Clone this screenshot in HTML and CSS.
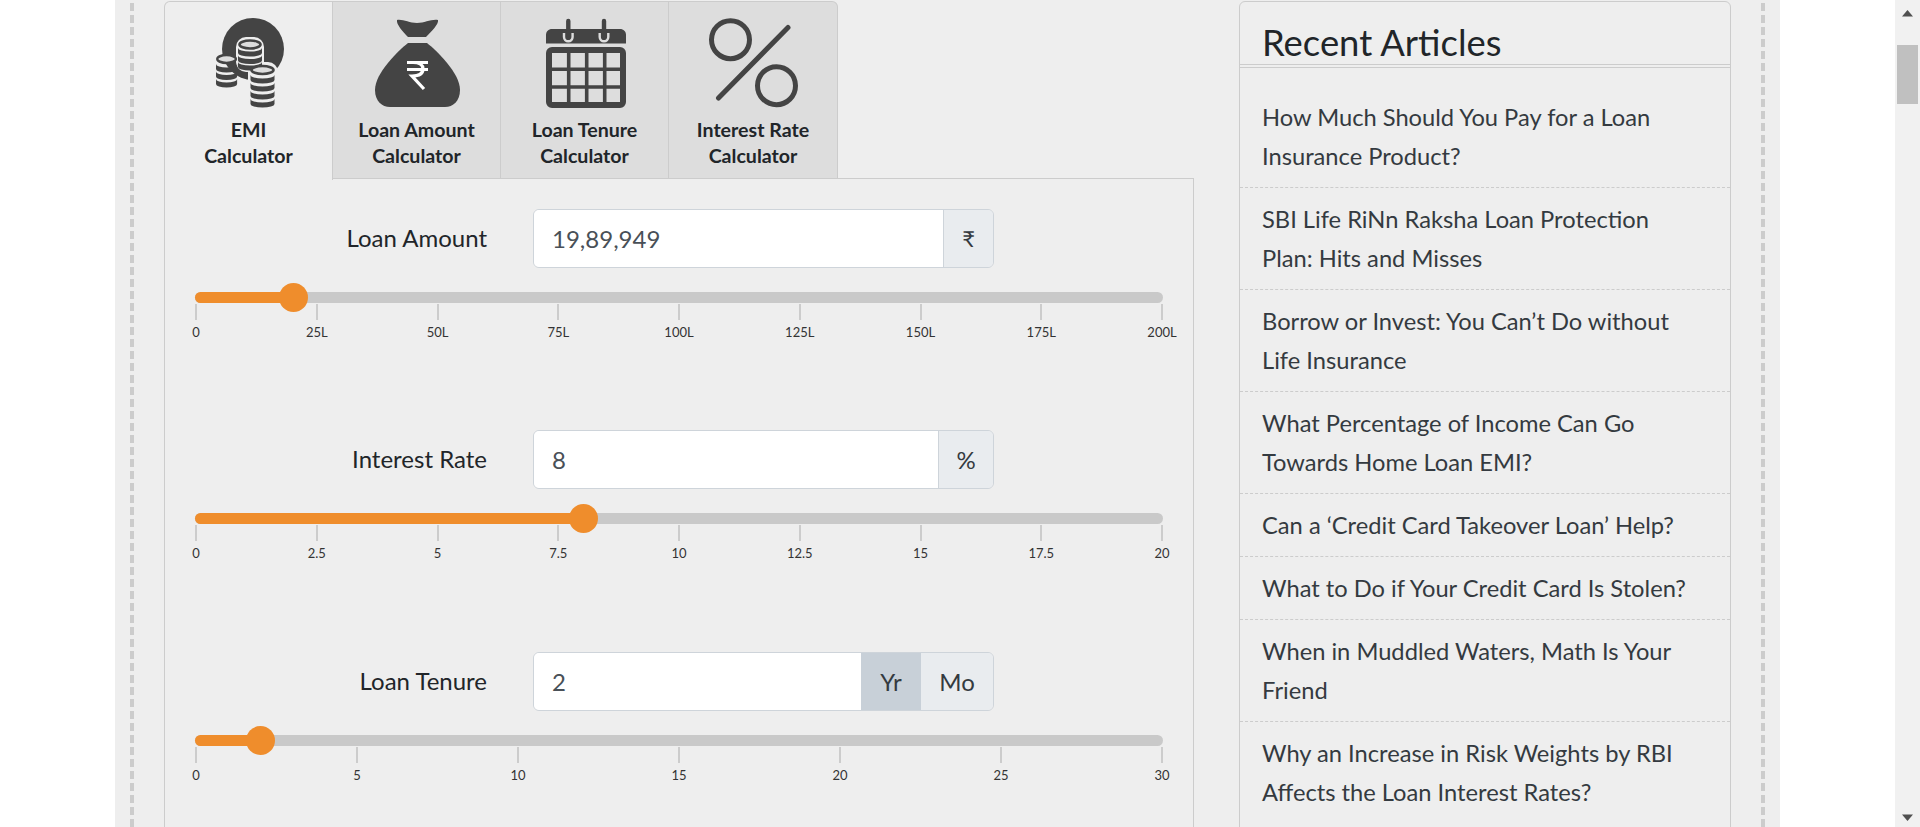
FILE: index.html
```html
<!DOCTYPE html>
<html lang="en">
<head>
    <meta charset="UTF-8">
    <meta name="viewport" content="width=device-width, initial-scale=1.0">
    <title>EMI Calculator</title>
    <link rel="stylesheet" href="styles.css">
</head>
<body>
<div class="screen">
    <div class="page">
        <div class="wrap">
            <main class="calculator">
                <nav class="tabs">
                    <a class="tab active">
                        <svg class="tab-icon" width="68" height="90" viewBox="0 0 68 90">
                            <defs>
                                <path id="band" d="M0 0a12 3.6 0 0 0 24 0v5a12 3.6 0 0 1-24 0z"/>
                            </defs>
                            <circle cx="37" cy="31" r="31" fill="#444"/>
                            <rect x="20" y="19" width="28" height="35" rx="10" fill="#eee"/>
                            <rect x="32" y="44" width="30" height="48" rx="10" fill="#eee"/>
                            <g fill="#444">
                                <ellipse cx="34" cy="26.5" rx="10.5" ry="4" fill="#ddd" stroke="#444" stroke-width="2.6"/>
                                <use href="#band" x="22" y="30"/>
                                <use href="#band" x="22" y="37.500"/>
                                <use href="#band" x="22" y="44"/>
                            </g>
                            <g fill="#444" transform="translate(0 15.5) scale(.88 1)">
                                <ellipse cx="12" cy="25.5" rx="10.6" ry="4" fill="#ddd" stroke="#444" stroke-width="2.6"/>
                                <use href="#band" y="30.500"/>
                                <use href="#band" y="38"/>
                                <use href="#band" y="45.500"/>
                            </g>
                            <g fill="#444">
                                <ellipse cx="46.5" cy="52" rx="11" ry="4" fill="#ddd" stroke="#444" stroke-width="2.6"/>
                                <use href="#band" x="34.5" y="57"/>
                                <use href="#band" x="34.5" y="65"/>
                                <use href="#band" x="34.5" y="73"/>
                                <use href="#band" x="34.5" y="81"/>
                            </g>
                        </svg>
                        <span>EMI<br>Calculator</span>
                    </a>
                    <a class="tab">
                        <svg class="tab-icon tab-icon-wide" width="85" height="90" viewBox="0 0 85 90">
                            <path fill="#444" d="M22 2C28 1 34 5 42 5S56 1 63 2C64 6 56 14 51 19H33C28 14 21 6 22 2Z"/>
                            <path fill="#444" d="M33 25H52C62 33 85 55 85 72C85 83 78 89 70 89H15C7 89 0 83 0 72C0 55 23 33 33 25Z"/>
                            <path fill="none" stroke="#fff" stroke-width="3.2" d="M32 44.5H53M32 51.5H53M38 44.5C45 44.5 48 47 48 51C48 55.5 44 58 37 58L49 71"/>
                        </svg>
                        <span>Loan Amount<br>Calculator</span>
                    </a>
                    <a class="tab">
                        <svg class="tab-icon" width="80" height="90" viewBox="0 0 80 90">
                            <path fill="#444" d="M0 25.5V17C0 13.500 2.500 11 6 11H74C77.500 11 80 13.500 80 17V25.500Z"/>
                            <path fill="none" stroke="#ddd" stroke-width="2.400" d="M18 15V19A4.300 4.300 0 0 0 26.600 19V15M53.700 15V19A4.300 4.300 0 0 0 62.300 19V15"/>
                            <path fill="none" stroke="#444" stroke-width="4.400" stroke-linecap="round" d="M22.300 3V19M58 3V19"/>
                            <rect x="3" y="32" width="74" height="55" rx="3" fill="none" stroke="#444" stroke-width="6"/>
                            <path fill="none" stroke="#444" stroke-width="3.600" d="M22.700 32V87M40.700 32V87M58.700 32V87M3 51.200H77M3 69H77"/>
                        </svg>
                        <span>Loan Tenure<br>Calculator</span>
                    </a>
                    <a class="tab last">
                        <svg class="tab-icon tab-icon-wide" width="90" height="90" viewBox="0 0 90 90">
                            <g fill="none" stroke="#444" stroke-width="5">
                                <circle cx="21.500" cy="21.700" r="19"/>
                                <circle cx="67.500" cy="67.700" r="19"/>
                                <path stroke-linecap="round" d="M79 9.500L9.500 80"/>
                            </g>
                        </svg>
                        <span>Interest Rate<br>Calculator</span>
                    </a>
                </nav>

                <section class="tab-content">
                    <div class="field">
                        <div class="field-row">
                            <label class="field-label">Loan Amount</label>
                            <div class="input-group">
                                <div class="field-input">19,89,949</div>
                                <span class="addon addon-rupee">₹</span>
                            </div>
                        </div>
                        <div class="slider">
                            <div class="slider-fill" style="width: 10.1%"></div>
                            <div class="slider-thumb" style="left: 10.1%"></div>
                        </div>
                        <div class="scale">
                            <div class="tick">0</div>
                            <div class="tick">25L</div>
                            <div class="tick">50L</div>
                            <div class="tick">75L</div>
                            <div class="tick">100L</div>
                            <div class="tick">125L</div>
                            <div class="tick">150L</div>
                            <div class="tick">175L</div>
                            <div class="tick">200L</div>
                        </div>
                    </div>

                    <div class="field">
                        <div class="field-row">
                            <label class="field-label">Interest Rate</label>
                            <div class="input-group">
                                <div class="field-input">8</div>
                                <span class="addon addon-percent">%</span>
                            </div>
                        </div>
                        <div class="slider">
                            <div class="slider-fill" style="width: 40.1%"></div>
                            <div class="slider-thumb" style="left: 40.1%"></div>
                        </div>
                        <div class="scale">
                            <div class="tick">0</div>
                            <div class="tick">2.5</div>
                            <div class="tick">5</div>
                            <div class="tick">7.5</div>
                            <div class="tick">10</div>
                            <div class="tick">12.5</div>
                            <div class="tick">15</div>
                            <div class="tick">17.5</div>
                            <div class="tick">20</div>
                        </div>
                    </div>

                    <div class="field">
                        <div class="field-row">
                            <label class="field-label">Loan Tenure</label>
                            <div class="input-group">
                                <div class="field-input">2</div>
                                <span class="addon addon-year selected">Yr</span>
                                <span class="addon addon-month">Mo</span>
                            </div>
                        </div>
                        <div class="slider">
                            <div class="slider-fill" style="width: 6.7%"></div>
                            <div class="slider-thumb" style="left: 6.7%"></div>
                        </div>
                        <div class="scale">
                            <div class="tick">0</div>
                            <div class="tick">5</div>
                            <div class="tick">10</div>
                            <div class="tick">15</div>
                            <div class="tick">20</div>
                            <div class="tick">25</div>
                            <div class="tick">30</div>
                        </div>
                    </div>
                </section>
            </main>

            <aside class="sidebar">
                <h2 class="sidebar-title">Recent Articles</h2>
                <ul class="articles">
                    <li>How Much Should You Pay for a Loan Insurance Product?</li>
                    <li>SBI Life RiNn Raksha Loan Protection Plan: Hits and Misses</li>
                    <li>Borrow or Invest: You Can’t Do without Life Insurance</li>
                    <li>What Percentage of Income Can Go Towards Home Loan EMI?</li>
                    <li>Can a ‘Credit Card Takeover Loan’ Help?</li>
                    <li>What to Do if Your Credit Card Is Stolen?</li>
                    <li>When in Muddled Waters, Math Is Your Friend</li>
                    <li>Why an Increase in Risk Weights by RBI Affects the Loan Interest Rates?</li>
                </ul>
            </aside>
        </div>
    </div>

    <div class="scrollbar">
        <svg class="scroll-arrow" width="11" height="7" viewBox="0 0 11 7"><path fill="#505050" d="M5.500 0L11 6.500H0Z"/></svg>
        <div class="scroll-track"><div class="scroll-thumb"></div></div>
        <svg class="scroll-arrow" width="11" height="7" viewBox="0 0 11 7"><path fill="#505050" d="M0 .5H11L5.500 7Z"/></svg>
    </div>
</div>
</body>
</html>
```

FILE: styles.css
```css
html, body {
    margin: 0;
    height: 100%;
    overflow: hidden;
    background: #fff;
}

body {
    font-family: "Lato", "Liberation Sans", sans-serif;
    color: #212529;
}

.screen {
    display: flex;
    height: 827px;
}

.page {
    flex: 1;
    min-width: 0;
    overflow: hidden;
    padding-left: 115px;
}

/* gray column with the dashed guide lines */
.wrap {
    width: 1665px;
    height: 827px;
    box-sizing: border-box;
    padding: 1px 49px 0 49px;
    display: grid;
    grid-template-columns: 1030px 1fr;
    column-gap: 45px;
    background-color: #eee;
    background-image:
        repeating-linear-gradient(to bottom, transparent 0, transparent 3px, #ccc 3px, #ccc 11px, transparent 11px, transparent 12px),
        repeating-linear-gradient(to bottom, transparent 0, transparent 3px, #ccc 3px, #ccc 11px, transparent 11px, transparent 12px);
    background-size: 4px 100%;
    background-position: 15px 0, 1646px 0;
    background-repeat: no-repeat;
}

/* tabs */
.tabs {
    display: flex;
    height: 178px;
}

.tab {
    box-sizing: border-box;
    width: 168px;
    padding-top: 16px;
    display: flex;
    flex-direction: column;
    align-items: center;
    text-align: center;
    font-size: 19.6px;
    font-weight: 700;
    line-height: 26px;
    background: #ddd;
    border: 1px solid #ccc;
    border-left: 0;
}

.tab.active {
    width: 169px;
    background: #eee;
    border-left: 1px solid #ccc;
    border-bottom: 0;
    border-top-left-radius: 6px;
    position: relative;
    height: 179px;
    z-index: 1;
}

.tab.last {
    width: 169px;
    border-top-right-radius: 6px;
}

.tab-icon {
    display: block;
    margin: 0 0 9px 3px;
    flex: none;
}

.tab-icon-wide {
    margin-left: 1px;
}

.tab-content {
    box-sizing: border-box;
    height: 700px;
    padding: 30px 30px 0;
    border: 1px solid #ccc;
    margin-top: -1px;
}

/* form rows */
.field {
    height: 221.4px;
}

.field-row {
    display: grid;
    grid-template-columns: 292px 461px;
    column-gap: 46px;
    align-items: center;
}

.field-label {
    text-align: right;
    font-size: 24px;
    padding-bottom: 2px;
}

.input-group {
    display: flex;
    height: 59px;
    box-sizing: border-box;
    border: 1px solid #ced4da;
    border-radius: 6px;
    overflow: hidden;
    font-size: 24px;
    color: #495057;
}

.field-input {
    flex: 1;
    background: #fff;
    padding-left: 18px;
    line-height: 57px;
}

.addon {
    box-sizing: border-box;
    background: #e9ecef;
    display: flex;
    align-items: center;
    justify-content: center;
    color: #343a40;
}

.addon-rupee {
    width: 50px;
    border-left: 1px solid #ced4da;
    font-size: 22px;
}

.addon-percent {
    width: 55px;
    border-left: 1px solid #ced4da;
}

.addon-year {
    width: 60px;
}

.addon-month {
    width: 72px;
}

.addon.selected {
    background: #c8d0d8;
}

/* slider */
.slider {
    position: relative;
    height: 11px;
    margin-top: 24px;
    border-radius: 6px;
    background: #c9c9c9;
}

.slider-fill {
    height: 100%;
    border-radius: 6px 0 0 6px;
    background: #ef8d2c;
}

.slider-thumb {
    position: absolute;
    top: -9px;
    width: 29px;
    height: 29px;
    margin-left: -14px;
    border-radius: 50%;
    background: #ef8d2c;
}

.scale {
    display: flex;
    justify-content: space-between;
    margin: 1px 0 0 0;
}

.tick {
    width: 2px;
    display: flex;
    flex-direction: column;
    align-items: center;
    white-space: nowrap;
    font-size: 13px;
    line-height: 16px;
    color: #333;
}

.tick::before {
    content: "";
    display: block;
    flex: none;
    width: 2px;
    height: 16px;
    margin-bottom: 4px;
    background: #ccc;
}

/* recent articles */
.sidebar {
    box-sizing: border-box;
    height: 900px;
    border: 1px solid #ccc;
    border-radius: 6px 6px 0 0;
}

.sidebar-title {
    margin: 0;
    height: 55px;
    padding: 7px 22px 0;
    font-size: 36.4px;
    font-weight: 400;
    line-height: 66px;
    overflow: hidden;
    border-bottom: 1px solid #ccc;
    box-sizing: content-box;
}

.articles {
    list-style: none;
    margin: 0;
    padding: 18px 0 0;
    border-top: 1px solid #ccc;
    margin-top: 2px;
}

.articles li {
    padding: 12px 30px 11px 22px;
    font-size: 23.7px;
    line-height: 39px;
    color: #343a40;
    border-bottom: 1px dashed #ccc;
}

.articles li:last-child {
    border-bottom: 0;
}

/* fake window scrollbar */
.scrollbar {
    flex: none;
    width: 25px;
    display: flex;
    flex-direction: column;
    align-items: center;
    background: #f1f1f1;
    padding: 10px 0 6px;
    box-sizing: border-box;
}

.scroll-arrow {
    flex: none;
}

.scroll-track {
    flex: 1;
    width: 100%;
    padding: 28px 2px 0;
    box-sizing: border-box;
}

.scroll-thumb {
    height: 59px;
    background: #c0c0c0;
}
```
